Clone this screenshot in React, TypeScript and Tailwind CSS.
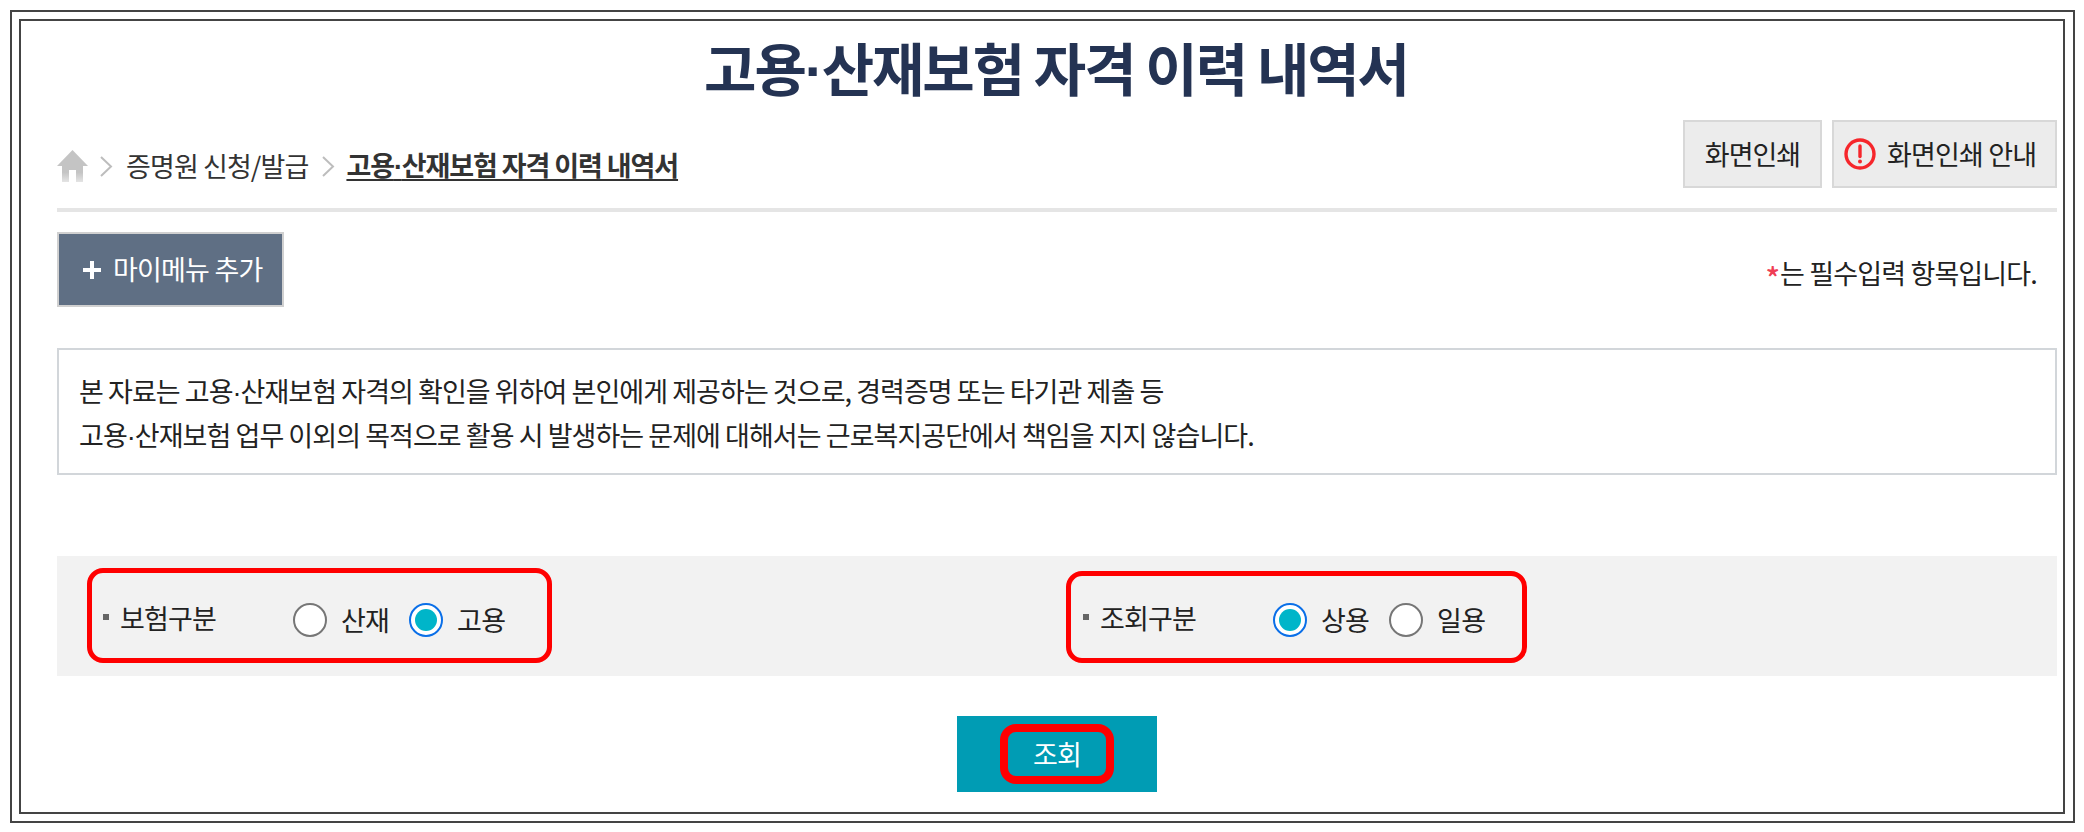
import React from "react";

function Dot() {
  return <span className="[font-family:'Liberation_Sans',sans-serif]">·</span>;
}

function Radio({ on }: { on?: boolean }) {
  return on ? (
    <span className="flex h-[34px] w-[34px] shrink-0 items-center justify-center rounded-full border-2 border-[#0a6fe8] bg-white">
      <span className="block h-[22px] w-[22px] rounded-full bg-[#00b5c9]" />
    </span>
  ) : (
    <span className="block h-[34px] w-[34px] shrink-0 rounded-full border-2 border-[#767676] bg-white" />
  );
}

function Label({ text }: { text: string }) {
  return (
    <div className="flex -translate-y-[3px] items-center">
      <span className="block h-[6px] w-[6px] shrink-0 bg-[#666]" />
      <span className="ml-[11px] w-[173px] text-[27px] leading-none tracking-[-0.8px] text-[#222]">{text}</span>
    </div>
  );
}

function Chevron() {
  return (
    <svg width="14" height="21" viewBox="0 0 14 21" className="block shrink-0">
      <path d="M2 1 L12 10.5 L2 20" fill="none" stroke="#bdbdbd" strokeWidth="2" />
    </svg>
  );
}

export default function App() {
  return (
    <div className="h-[832px] w-[2084px] bg-white pb-[9px] pl-[10px] pr-[9px] pt-[10px] [font-family:'Noto_Sans_CJK_KR','Noto_Sans',sans-serif]">
      <div className="h-full border-2 border-[#444] pb-[7px] pl-[7px] pr-[8px] pt-[7px]">
        <div className="h-full border-2 border-[#444] pl-[36px] pr-[6px] text-[#222]">
          <h1 className="flex h-[99px] items-center justify-center pb-[3px] pr-[2px] text-[57px] font-bold tracking-[-2.1px] text-[#243353]">
            <span>고용<Dot />산재보험 자격 이력 내역서</span>
          </h1>

          <div className="flex h-[68px] items-end justify-between">
            <div className="flex items-center pb-[6px]">
              <svg width="31" height="32" viewBox="0 0 31 32" className="block shrink-0">
                <defs>
                  <linearGradient id="homeFade" x1="0" y1="0" x2="0" y2="1">
                    <stop offset="0.7" stopColor="#c4c4c4" />
                    <stop offset="1" stopColor="#e4e4e4" />
                  </linearGradient>
                </defs>
                <path d="M15.5 0 L31 16 L26 16 L26 32 L19 32 L19 20 L12 20 L12 32 L5 32 L5 16 L0 16 Z" fill="url(#homeFade)" />
              </svg>
              <div className="ml-[11px]"><Chevron /></div>
              <span className="ml-[13px] text-[27px] leading-[32px] tracking-[-0.9px] text-[#333]">증명원 신청/발급</span>
              <div className="ml-[13px]"><Chevron /></div>
              <span className="ml-[11px] text-[27px] font-semibold leading-[30px] tracking-[-1.1px] text-[#333] underline decoration-2 underline-offset-[3px]">
                고용<Dot />산재보험 자격 이력 내역서
              </span>
            </div>
            <div className="flex gap-[10px]">
              <div className="flex h-[68px] w-[139px] items-center justify-center border-2 border-[#d8d8d8] bg-[#ececec] text-[27px] tracking-[-1px]">
                화면인쇄
              </div>
              <div className="flex h-[68px] w-[225px] items-center gap-[11px] border-2 border-[#d8d8d8] bg-[#ececec] pl-[10px] text-[27px] tracking-[-0.85px]">
                <svg width="32" height="32" viewBox="0 0 32 32" className="block shrink-0">
                  <circle cx="16" cy="16" r="14" fill="none" stroke="#f6262b" strokeWidth="3.4" />
                  <path d="M16 8 V18.5" stroke="#f6262b" strokeWidth="3.4" strokeLinecap="round" />
                  <circle cx="16" cy="23.5" r="2" fill="#f6262b" />
                </svg>
                <span>화면인쇄 안내</span>
              </div>
            </div>
          </div>

          <div className="mt-[20px] h-[4px] bg-[#e5e5e5]" />

          <div className="mt-[20px] flex items-center justify-between">
            <div className="flex h-[75px] w-[227px] items-center border-2 border-[#d0d0d0] bg-[#5f6f84] pl-[24px] text-white">
              <svg width="18" height="18" viewBox="0 0 18 18" className="block shrink-0">
                <path d="M9 0 V18 M0 9 H18" stroke="#fff" strokeWidth="4" />
              </svg>
              <span className="ml-[12px] text-[27px] tracking-[-0.8px]">마이메뉴 추가</span>
            </div>
            <div className="mr-[20px] flex items-center pt-[8px] text-[27px] tracking-[-0.85px]">
              <span className="mr-[1px] translate-y-[4px] text-[30px] font-medium text-[#ef3e55]">*</span>
              <span>는 필수입력 항목입니다.</span>
            </div>
          </div>

          <div className="mt-[41px] flex h-[127px] flex-col justify-center border-2 border-[#d2d6da] pl-[20px] pt-[5px] text-[27px] leading-[42px] tracking-[-0.95px]">
            <p>본 자료는 고용<Dot />산재보험 자격의 확인을 위하여 본인에게 제공하는 것으로, 경력증명 또는 타기관 제출 등</p>
            <p>고용<Dot />산재보험 업무 이외의 목적으로 활용 시 발생하는 문제에 대해서는 근로복지공단에서 책임을 지지 않습니다.</p>
          </div>

          <div className="mt-[81px] flex h-[120px] items-start bg-[#f2f2f2] pl-[30px]">
            <div className="mt-[12px] flex h-[95px] w-[465px] items-center rounded-[16px] border-[5px] border-[#ff0000] pl-[11px] pt-[9px] text-[27px] tracking-[-0.8px]">
              <Label text="보험구분" />
              <Radio />
              <span className="ml-[14px]">산재</span>
              <div className="ml-[20px]"><Radio on /></div>
              <span className="ml-[14px]">고용</span>
            </div>
            <div className="ml-[514px] mt-[15px] flex h-[92px] w-[461px] items-center rounded-[16px] border-[5px] border-[#ff0000] pl-[12px] pt-[6px] text-[27px] tracking-[-0.8px]">
              <Label text="조회구분" />
              <Radio on />
              <span className="ml-[14px]">상용</span>
              <div className="ml-[20px]"><Radio /></div>
              <span className="ml-[14px]">일용</span>
            </div>
          </div>

          <div className="mt-[40px] flex justify-center">
            <div className="flex h-[76px] w-[200px] items-center justify-center bg-[#009cb4]">
              <div className="flex h-[60px] w-[114px] items-center justify-center rounded-[16px] border-[8px] border-[#ff0000] text-[27px] tracking-[-0.8px] text-white">
                조회
              </div>
            </div>
          </div>
        </div>
      </div>
    </div>
  );
}
